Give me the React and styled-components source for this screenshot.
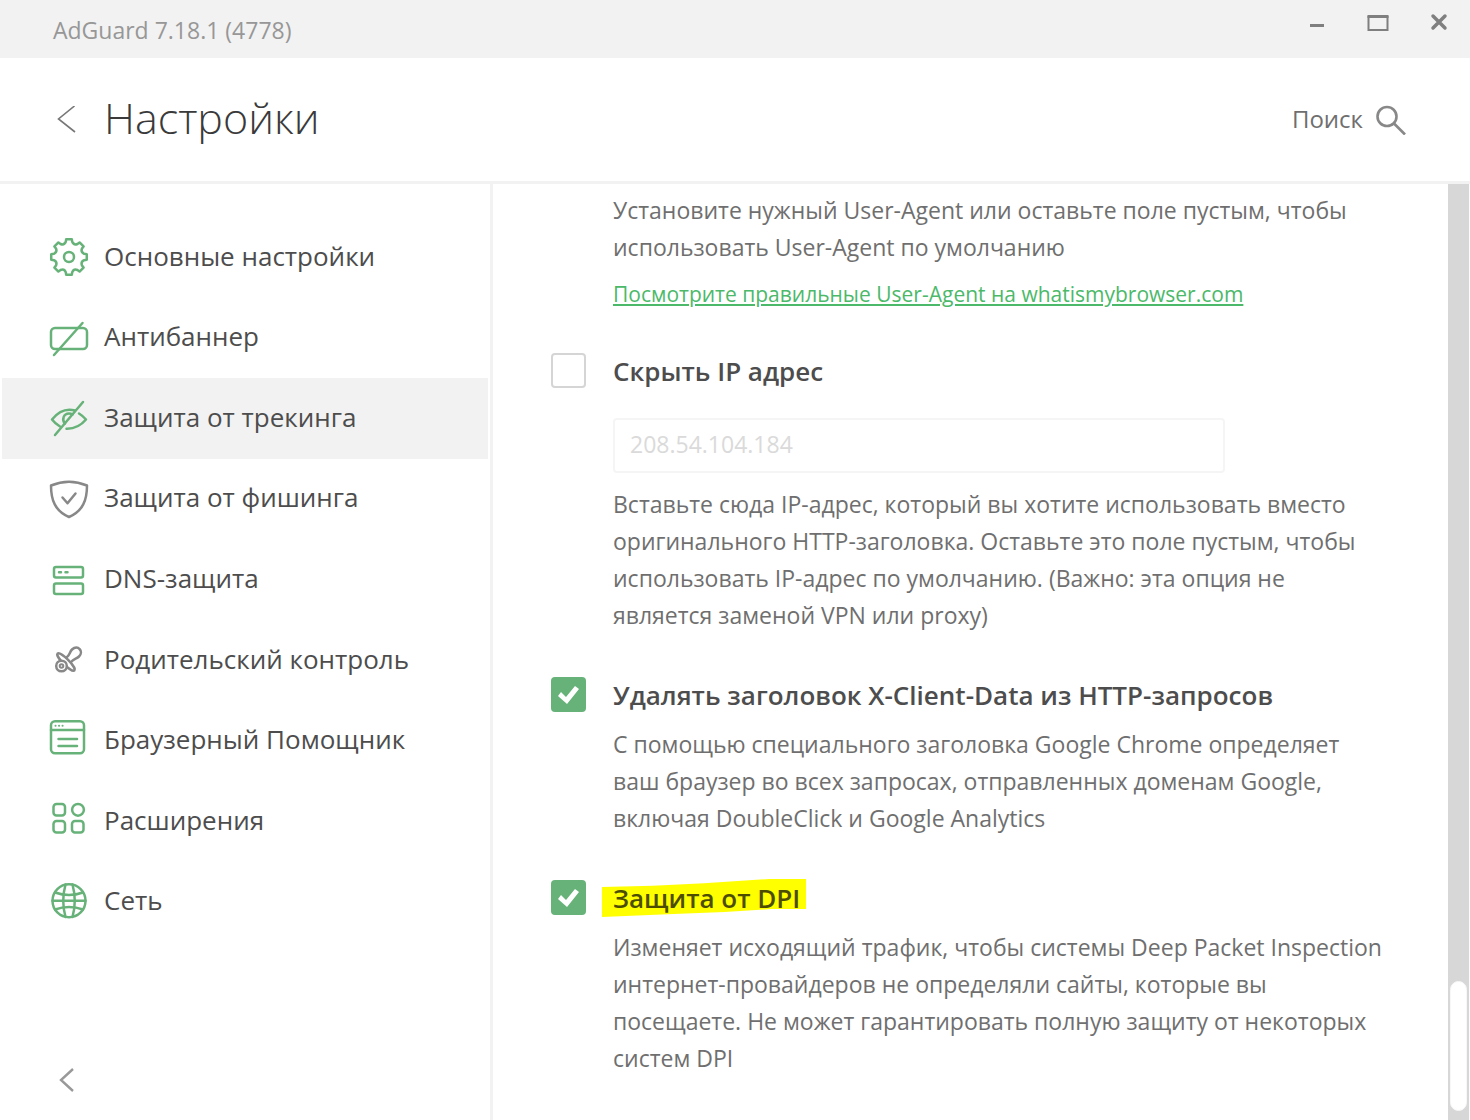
import React, { useState } from 'react';
import styled, { createGlobalStyle } from 'styled-components';

const GREEN = '#67b279';
const GRAY = '#888888';

// cog outline: eight teeth with scalloped valleys between them
const gearPath = () => {
  const at = (deg, r) => {
    const a = ((deg - 90) * Math.PI) / 180;
    return `${(19 + r * Math.cos(a)).toFixed(2)} ${(19 + r * Math.sin(a)).toFixed(2)}`;
  };
  let d = `M${at(-9, 18)}`;
  for (let k = 0; k < 8; k++) {
    const t = k * 45;
    d += ` L${at(t + 9, 18)} L${at(t + 12, 15.5)} Q${at(t + 22.5, 12.5)} ${at(t + 33, 15.5)} L${at(t + 36, 18)}`;
  }
  return d + 'Z';
};

const icons = {
  gear: (
    <>
      <path d={gearPath()} />
      <circle cx="19" cy="19" r="5" />
    </>
  ),
  banner: (
    <>
      <rect x="1" y="9" width="36" height="21" rx="4" />
      <path d="M32.5 4 4 36" />
    </>
  ),
  eye: (
    <>
      <path d="M10 27.5Q5 24.5 2 20.5Q12 8 25 11.5" />
      <path d="M29 14.5Q33 17 36 20.5Q28 30 16.5 29.7" />
      <path d="M15 24.5C11.5 21 13.5 14.5 19 14.5Q21 14.5 22.5 15.5" />
      <path d="M33 3 5 36" />
    </>
  ),
  shield: (
    <>
      <path d="M19 1.7Q28 1.7 37 5.5C37 20 33 31 19 37C5 31 1 20 1 5.5Q10 1.7 19 1.7Z" />
      <path d="M12.5 17.5 17.5 23.3 25.5 13.5" />
    </>
  ),
  server: (
    <>
      <rect x="4" y="7" width="29" height="10.5" rx="2" />
      <rect x="4" y="23.5" width="29" height="10.5" rx="2" />
      <path d="M9 12.3h2M15.5 12.3h2" />
    </>
  ),
  pacifier: (
    <>
      <path d="M16.5 16.5C20 14 19.5 11 22 8.5C25 5.5 28 6 29.5 8C31.5 10 31.5 13 29 15.5C26.5 18 24 17.5 21 21" />
      <ellipse cx="16" cy="21" rx="12" ry="3" transform="rotate(45 16 21)" />
      <circle cx="11.5" cy="25" r="5.3" fill="#fff" />
      <circle cx="11.5" cy="25" r="1.8" strokeWidth="2" />
    </>
  ),
  browser: (
    <>
      <rect x="1" y="-0.7" width="33" height="32" rx="4" />
      <path d="M1 8h33M8.5 17h18.5M8.5 24h18.5" />
      <path d="M5.5 3.7h.1M9 3.7h.1M12.5 3.7h.1" strokeWidth="2" />
    </>
  ),
  modules: (
    <>
      <rect x="3.5" y="2" width="11.5" height="11.5" rx="3" />
      <circle cx="28" cy="7.8" r="5.9" />
      <rect x="3.5" y="19" width="11.5" height="11.5" rx="3" />
      <rect x="22" y="19" width="11.5" height="11.5" rx="3" />
    </>
  ),
  globe: (
    <>
      <circle cx="19" cy="17.8" r="16.5" />
      <path d="M2.5 17.8h33M5 9.5Q19 14.5 33 9.5M5 26.5Q19 21.5 33 26.5" />
      <path d="M15.5 1.5Q11 17.8 15.5 34M22.5 1.5Q27 17.8 22.5 34" />
    </>
  ),
};

const navItems = [
  { icon: 'gear', label: 'Основные настройки' },
  { icon: 'banner', label: 'Антибаннер' },
  { icon: 'eye', label: 'Защита от трекинга' },
  { icon: 'shield', label: 'Защита от фишинга', off: true },
  { icon: 'server', label: 'DNS-защита' },
  { icon: 'pacifier', label: 'Родительский контроль', off: true },
  { icon: 'browser', label: 'Браузерный Помощник' },
  { icon: 'modules', label: 'Расширения' },
  { icon: 'globe', label: 'Сеть' },
];

const Lines = ({ items }) =>
  items.map((line, i) => (
    <React.Fragment key={line}>
      {i > 0 && <br />}
      {line}
    </React.Fragment>
  ));

const App = () => {
  const [active, setActive] = useState(2);

  return (
    <>
      <GlobalStyle />
      <Window>
        <TitleBar>
          <AppName>AdGuard 7.18.1 (4778)</AppName>
          <WindowControls>
            <IconButton aria-label="Свернуть">
              <svg width="22" height="22" viewBox="0 0 22 22">
                <path d="M4 14.5h14" stroke="#7f7f7f" strokeWidth="3" />
              </svg>
            </IconButton>
            <IconButton aria-label="Развернуть">
              <svg width="22" height="22" viewBox="0 0 22 22" fill="none" stroke="#7f7f7f">
                <path d="M.5 5.5h21" strokeWidth="3" />
                <path d="M1.5 5v14h19V5" strokeWidth="2" />
              </svg>
            </IconButton>
            <IconButton aria-label="Закрыть">
              <svg width="22" height="22" viewBox="0 0 22 22">
                <path d="M5 5l12 12M17 5 5 17" stroke="#7f7f7f" strokeWidth="3.5" strokeLinecap="round" />
              </svg>
            </IconButton>
          </WindowControls>
        </TitleBar>

        <Header>
          <HeaderLeft>
            <IconButton aria-label="Назад">
              <svg width="20" height="28" viewBox="0 0 20 28" fill="none" stroke="#777" strokeWidth="1.6">
                <path d="M18.5 0 2.5 13 19 26" />
              </svg>
            </IconButton>
            <Heading>Настройки</Heading>
          </HeaderLeft>
          <SearchButton>
            <SearchText>Поиск</SearchText>
            <svg width="30" height="30" viewBox="0 0 30 30" fill="none" stroke={GRAY} strokeWidth="2.6">
              <circle cx="11" cy="11.5" r="9.5" />
              <path d="M18 18.5 29 29.5" />
            </svg>
          </SearchButton>
        </Header>

        <Body>
          <Sidebar>
            <Nav>
              {navItems.map((item, i) => (
                <NavButton key={item.icon} $active={i === active} onClick={() => setActive(i)}>
                  <NavIcon viewBox="0 0 38 38" $off={item.off}>
                    {icons[item.icon]}
                  </NavIcon>
                  <NavLabel>{item.label}</NavLabel>
                </NavButton>
              ))}
            </Nav>
            <Collapse aria-label="Свернуть меню">
              <svg width="16" height="24" viewBox="0 0 16 24" fill="none" stroke="#999" strokeWidth="2.4">
                <path d="M15 1 3 12 15 23" />
              </svg>
            </Collapse>
          </Sidebar>

          <Content>
            <Option>
              <OptionBody>
                <Description>
                  <Lines
                    items={[
                      'Установите нужный User-Agent или оставьте поле пустым, чтобы ',
                      'использовать User-Agent по умолчанию',
                    ]}
                  />
                </Description>
                <Link href="#user-agent">Посмотрите правильные User-Agent на whatismybrowser.com</Link>
              </OptionBody>
            </Option>

            <Option>
              <Checkbox id="hide-ip" type="checkbox" />
              <OptionTitle htmlFor="hide-ip">Скрыть IP адрес</OptionTitle>
              <OptionBody>
                <IpInput aria-label="IP-адрес" placeholder="208.54.104.184" />
                <Description>
                  <Lines
                    items={[
                      'Вставьте сюда IP-адрес, который вы хотите использовать вместо ',
                      'оригинального HTTP-заголовка. Оставьте это поле пустым, чтобы ',
                      'использовать IP-адрес по умолчанию. (Важно: эта опция не ',
                      'является заменой VPN или proxy)',
                    ]}
                  />
                </Description>
              </OptionBody>
            </Option>

            <Option>
              <Checkbox id="x-client-data" type="checkbox" defaultChecked />
              <OptionTitle htmlFor="x-client-data">Удалять заголовок X-Client-Data из HTTP-запросов</OptionTitle>
              <OptionBody>
                <Description>
                  <Lines
                    items={[
                      'С помощью специального заголовка Google Chrome определяет ',
                      'ваш браузер во всех запросах, отправленных доменам Google, ',
                      'включая DoubleClick и Google Analytics',
                    ]}
                  />
                </Description>
              </OptionBody>
            </Option>

            <Option>
              <Checkbox id="dpi" type="checkbox" defaultChecked />
              <OptionTitle htmlFor="dpi" $marked>
                Защита от DPI
              </OptionTitle>
              <OptionBody>
                <Description>
                  <Lines
                    items={[
                      'Изменяет исходящий трафик, чтобы системы Deep Packet Inspection ',
                      'интернет-провайдеров не определяли сайты, которые вы ',
                      'посещаете. Не может гарантировать полную защиту от некоторых ',
                      'систем DPI',
                    ]}
                  />
                </Description>
              </OptionBody>
            </Option>
          </Content>

          <ScrollTrack>
            <ScrollThumb />
          </ScrollTrack>
        </Body>
      </Window>
    </>
  );
};

const GlobalStyle = createGlobalStyle`
  * {
    box-sizing: border-box;
  }

  body {
    margin: 0;
    background: #ffffff;
    color: #4d4d4d;
    font-family: "Segoe UI", "Open Sans", "Noto Sans", sans-serif;
  }

  button,
  input {
    font-family: inherit;
  }
`;

const Window = styled.div`
  display: flex;
  flex-direction: column;
  min-height: 100vh;
`;

const TitleBar = styled.div`
  display: flex;
  align-items: center;
  justify-content: space-between;
  height: 58px;
  padding: 0 20px 0 53px;
  background: #f2f2f2;
`;

const AppName = styled.div`
  padding-top: 2px;
  color: #979797;
  font-size: 23px;
`;

const WindowControls = styled.div`
  display: flex;
  align-items: center;
  gap: 39px;
  padding-bottom: 14px;
`;

const IconButton = styled.button`
  display: flex;
  padding: 0;
  border: none;
  background: none;
  cursor: pointer;
`;

const Header = styled.header`
  display: flex;
  align-items: center;
  justify-content: space-between;
  height: 126px;
  padding: 0 64px 0 56px;
  border-bottom: 3px solid #f2f2f2;
`;

const HeaderLeft = styled.div`
  display: flex;
  align-items: center;
  gap: 28px;
`;

const Heading = styled.h1`
  margin: 0;
  padding-bottom: 4px;
  color: #3a3a3a;
  font-size: 43px;
  font-weight: 300;
`;

const SearchButton = styled.button`
  display: flex;
  align-items: center;
  gap: 13px;
  padding: 0;
  border: none;
  background: none;
  color: #6f6f6f;
  font-size: 24px;
  cursor: pointer;
`;

const SearchText = styled.span`
  padding-bottom: 3px;
`;

const Body = styled.div`
  display: flex;
  flex: 1;
`;

const Sidebar = styled.aside`
  display: flex;
  flex-direction: column;
  flex: 0 0 493px;
  justify-content: space-between;
  padding: 33px 2px 28px;
  border-right: 3px solid #f2f2f2;
`;

const Nav = styled.nav`
  display: grid;
  grid-auto-rows: 1fr;
  height: 725px;
`;

const NavButton = styled.button`
  display: flex;
  align-items: center;
  gap: 16px;
  padding: 0 0 0 48px;
  border: none;
  background: ${({ $active }) => ($active ? '#f2f2f2' : 'none')};
  color: #4d4d4d;
  font-size: 26px;
  text-align: left;
  cursor: pointer;
`;

const NavIcon = styled.svg`
  width: 38px;
  height: 38px;
  overflow: visible;
  fill: none;
  stroke: ${({ $off }) => ($off ? GRAY : GREEN)};
  stroke-width: 2.5;
  stroke-linecap: round;
  stroke-linejoin: round;
`;

const NavLabel = styled.span`
  padding-bottom: 3px;
`;

const Collapse = styled(IconButton)`
  align-self: flex-start;
  margin-left: 56px;
`;

const Content = styled.main`
  display: flex;
  flex-direction: column;
  flex: 1;
  gap: 43px;
  padding: 8px 40px 40px 58px;
`;

const Option = styled.section`
  display: grid;
  grid-template-columns: 35px 1fr;
  column-gap: 27px;
  row-gap: 12px;
`;

const OptionBody = styled.div`
  grid-column: 2;
`;

const Checkbox = styled.input`
  appearance: none;
  width: 35px;
  height: 35px;
  margin: 0;
  border: 2px solid #d5d5d5;
  border-radius: 4px;
  background: #ffffff;

  &:checked {
    border: none;
    background: ${GREEN};
  }

  &:checked::before {
    content: '';
    display: block;
    width: 35px;
    height: 35px;
    background: #ffffff;
    clip-path: polygon(7px 19px, 10px 15px, 15px 20px, 24px 9px, 28px 12px, 16px 27px);
  }
`;

const OptionTitle = styled.label`
  position: relative;
  z-index: 0;
  justify-self: start;
  color: ${({ $marked }) => ($marked ? '#4d4d00' : '#4d4d4d')};
  font-size: 26px;
  font-weight: 600;
  line-height: 37px;

  /* highlighter stroke under the text */
  &::before {
    content: '';
    display: ${({ $marked }) => ($marked ? 'block' : 'none')};
    position: absolute;
    z-index: -1;
    top: -1px;
    right: -6px;
    bottom: 0;
    left: -11px;
    background: #ffff00;
    clip-path: polygon(0 21%, 25% 18%, 50% 11%, 82% 0, 100% 0, 100% 79%, 83% 79%, 60% 87%, 35% 92%, 0 100%);
  }
`;

const Description = styled.p`
  margin: 0;
  color: #6f6f6f;
  font-size: 23px;
  line-height: 37px;
`;

const Link = styled.a`
  display: block;
  width: fit-content;
  margin-top: 13px;
  color: #4bb969;
  font-size: 21px;
  line-height: 31px;
`;

const IpInput = styled.input`
  display: block;
  width: 100%;
  max-width: 612px;
  height: 55px;
  margin: 16px 0 13px;
  padding: 0 15px 4px;
  border: 2px solid #f5f5f5;
  border-radius: 4px;
  color: #6f6f6f;
  font-size: 23px;

  &::placeholder {
    color: #dadada;
  }
`;

const ScrollTrack = styled.div`
  display: flex;
  flex: 0 0 21px;
  flex-direction: column;
  justify-content: flex-end;
  margin-right: 1px;
  padding: 0 2px 9px;
  background: #d7d7d7;
`;

const ScrollThumb = styled.div`
  height: 130px;
  border: 1px solid #f7f7f7;
  border-radius: 9px;
  background: #ffffff;
`;

export default App;
